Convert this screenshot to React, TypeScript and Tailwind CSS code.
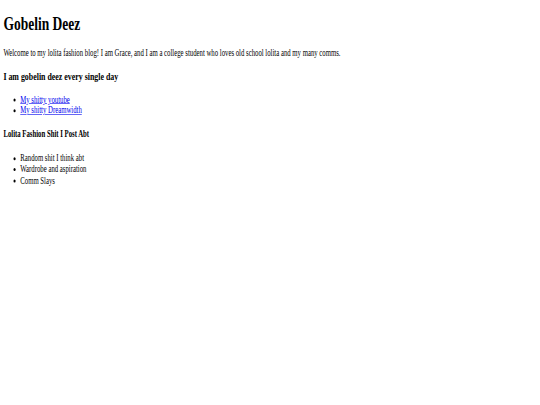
export default function App() {
  return (
    <div className="w-[540px] h-[405px] overflow-hidden bg-white">
      <div
        className="w-[1280px] origin-top-left scale-x-[0.422] scale-y-[0.6] px-2 pt-px text-black"
        style={{ fontFamily: '"Liberation Serif", "Times New Roman", serif' }}
      >
        <h1 className="text-[32px] font-bold leading-[1.15] mt-[20.44px] mb-[21.44px]">Gobelin Deez</h1>
        <p className="text-[16px] leading-[1.15] my-4">
          Welcome to my lolita fashion blog! I am Grace, and I am a college student who loves old school lolita and my many comms.
        </p>
        <h3 className="text-[18.72px] font-bold leading-[1.15] my-[18.72px]">I am gobelin deez every single day</h3>
        <ul className="list-disc pl-10 my-4 text-[16px] leading-[1.15]">
          <li>
            <a href="#" className="text-[#0000ee] underline">My shitty youtube</a>
          </li>
          <li>
            <a href="#" className="text-[#0000ee] underline">My shitty Dreamwidth</a>
          </li>
        </ul>
        <h4 className="text-[16px] font-bold leading-[1.15] my-[21.28px]">Lolita Fashion Shit I Post Abt</h4>
        <ul className="list-disc pl-10 my-4 text-[16px] leading-[1.15]">
          <li>Random shit I think abt</li>
          <li>Wardrobe and aspiration</li>
          <li>Comm Slays</li>
        </ul>
      </div>
    </div>
  );
}
